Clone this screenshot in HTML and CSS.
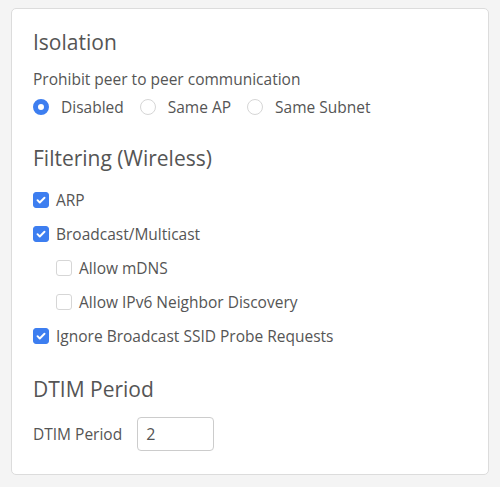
FILE: index.html
```html
<!DOCTYPE html>
<html>
<head>
<meta charset="utf-8">
<link rel="stylesheet" href="styles.css">
</head>
<body>
<div class="card">
  <h2 class="title">Isolation</h2>
  <div class="label">Prohibit peer to peer communication</div>
  <div class="radios">
    <label class="opt"><span class="radio on"></span>Disabled</label>
    <label class="opt"><span class="radio"></span>Same AP</label>
    <label class="opt"><span class="radio"></span>Same Subnet</label>
  </div>

  <h2 class="title t2">Filtering (Wireless)</h2>
  <div class="checks">
    <label class="chk"><span class="box on"><svg viewBox="0 0 16 16"><path d="M4 8.2l2.6 2.6L12 5.4" fill="none" stroke="#fff" stroke-width="2.2" stroke-linecap="round" stroke-linejoin="round"/></svg></span>ARP</label>
    <label class="chk"><span class="box on"><svg viewBox="0 0 16 16"><path d="M4 8.2l2.6 2.6L12 5.4" fill="none" stroke="#fff" stroke-width="2.2" stroke-linecap="round" stroke-linejoin="round"/></svg></span>Broadcast/Multicast</label>
    <label class="chk sub"><span class="box"></span>Allow mDNS</label>
    <label class="chk sub"><span class="box"></span>Allow IPv6 Neighbor Discovery</label>
    <label class="chk"><span class="box on"><svg viewBox="0 0 16 16"><path d="M4 8.2l2.6 2.6L12 5.4" fill="none" stroke="#fff" stroke-width="2.2" stroke-linecap="round" stroke-linejoin="round"/></svg></span>Ignore Broadcast SSID Probe Requests</label>
  </div>

  <h2 class="title t3">DTIM Period</h2>
  <div class="dtim">
    <span class="dlabel">DTIM Period</span>
    <input class="inp" type="text" value="2">
  </div>
</div>
</body>
</html>
```
FILE: styles.css
```css
html, body { margin: 0; padding: 0; }
body {
  background: #f4f4f4;
  font-family: "Open Sans", sans-serif;
  color: #555;
  width: 500px;
  height: 487px;
}
.card {
  margin: 8px 0 0 11px;
  width: 478px;
  height: 467px;
  box-sizing: border-box;
  background: #fff;
  border: 1px solid #dcdcdc;
  border-radius: 5px;
  padding: 20px 21px 0 21px;
}
.title {
  margin: 0;
  font-weight: 400;
  font-size: 21px;
  line-height: 26px;
  color: #555;
}
.t2 { margin-top: 28px; }
.t3 { margin-top: 30px; }
.label {
  margin-top: 14px;
  font-size: 15.5px;
  line-height: 20px;
}
.radios {
  display: flex;
  gap: 16px;
  margin-top: 8px;
  font-size: 15.5px;
  line-height: 20px;
}
.opt { display: flex; align-items: center; }
.radio {
  width: 14px; height: 14px;
  border: 1px solid #d6d6d6;
  border-radius: 50%;
  margin-right: 12px;
  box-sizing: content-box;
  background: #fff;
}
.radio.on {
  width: 6px; height: 6px;
  border: 5px solid #3d7ef0;
}
.checks {
  margin-top: 19px;
  display: flex;
  flex-direction: column;
  gap: 14px;
}
.chk {
  display: flex;
  align-items: center;
  font-size: 15.5px;
  line-height: 20px;
}
.chk.sub { padding-left: 23px; }
.box {
  width: 14px; height: 14px;
  border: 1px solid #d6d6d6;
  border-radius: 3px;
  margin-right: 7px;
  background: #fff;
  display: flex;
}
.box.on {
  background: #3d7ef0;
  border-color: #3d7ef0;
}
.box svg { width: 14px; height: 14px; }
.dtim {
  display: flex;
  align-items: center;
  margin-top: 15px;
}
.dlabel { font-size: 15.5px; margin-right: 15px; }
.inp {
  width: 77px;
  height: 34px;
  box-sizing: border-box;
  border: 1px solid #ccc;
  border-radius: 4px;
  font-family: "Open Sans", sans-serif;
  font-size: 16px;
  color: #555;
  padding: 0 8px;
  outline: none;
}
```
